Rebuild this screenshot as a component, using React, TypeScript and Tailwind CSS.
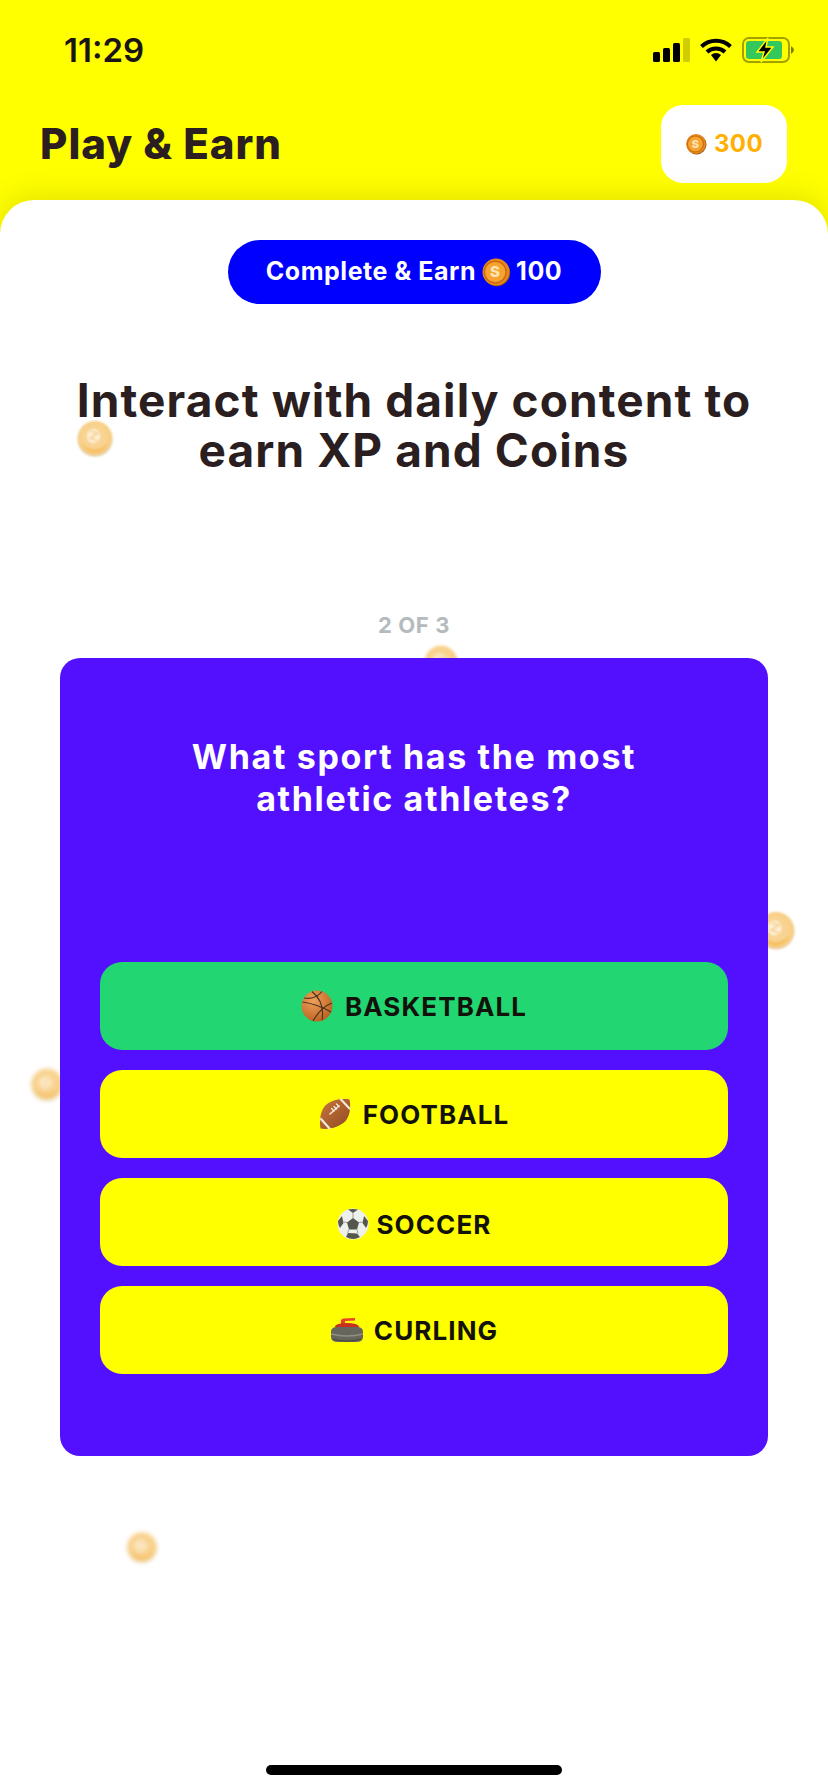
const font = "font-['Inter','Liberation_Sans',sans-serif]";

const Coin: React.FC<{ className?: string }> = ({ className }) => {
  return (
    <svg viewBox="0 0 40 40" className={className}>
      <circle cx="21" cy="21" r="18" fill="#8a4f10" />
      <circle cx="20" cy="20" r="18" fill="#e8871c" />
      <circle cx="19" cy="20" r="14.5" fill="#f7a32f" stroke="#c96c12" strokeWidth="2" />
      <text x="19" y="27" textAnchor="middle" fontSize="20" fontWeight="800" fill="#ffe6b8" fontFamily="Inter, sans-serif">
        S
      </text>
    </svg>
  );
};

const FloatingCoin: React.FC<{ className: string }> = ({ className }) => {
  return (
    <svg viewBox="0 0 40 40" className={`absolute ${className}`}>
      <circle cx="20" cy="21" r="18.5" fill="#dcc9a0" />
      <circle cx="20" cy="20" r="18" fill="#f9cf86" />
      <circle cx="19" cy="19" r="13.5" fill="#f8d391" />
      <path d="M6 26 Q19 38 34 26 Q30 34 20 36 Q10 35 6 26 Z" fill="#f6bf62" />
      <ellipse cx="18.5" cy="18" rx="7" ry="7.5" fill="#fff1d8" />
      <path d="M15 13 L23 15 L15 20 L23 23" fill="none" stroke="#f3cd8d" strokeWidth="1.6" />
    </svg>
  );
};

const Basketball = () => (
  <svg viewBox="0 0 32 32" className="w-[32px] h-[32px] shrink-0">
    <defs>
      <radialGradient id="bball" cx="38%" cy="32%" r="75%">
        <stop offset="0%" stopColor="#f0a05a" />
        <stop offset="100%" stopColor="#b9601f" />
      </radialGradient>
    </defs>
    <circle cx="16" cy="16" r="15.5" fill="url(#bball)" />
    <g fill="none" stroke="#46301f" strokeWidth="1.1">
      <path d="M1.5 12 Q16 14 30 22" />
      <path d="M11 1.5 Q24 12 21 30" />
      <path d="M21 1.5 Q14 10 3 8" />
      <path d="M31 13 Q20 17 12 31" />
    </g>
  </svg>
);

const Football = () => (
  <svg viewBox="0 0 32 32" className="w-[32px] h-[32px] shrink-0">
    <defs>
      <linearGradient id="fball" x1="0" y1="0" x2="1" y2="1">
        <stop offset="0%" stopColor="#c9763c" />
        <stop offset="100%" stopColor="#8f4a22" />
      </linearGradient>
    </defs>
    <path d="M30.5 1.5 C20 0 9 3 4.5 10 C1 15 .5 24 1.5 30.5 C10 32 21 29 27 22.5 C31 17 32 9 30.5 1.5 Z" fill="url(#fball)" />
    <g fill="none" stroke="#f2e8d8" strokeLinecap="round">
      <path d="M22 1.5 L30.5 10.5" strokeWidth="2.2" />
      <path d="M2 21 L10.5 30.5" strokeWidth="2.2" />
      <path d="M11 16 L20 8" strokeWidth="1.6" />
      <path d="M12.5 10.5 L15 13 M15 8.5 L17.5 11 M17.5 6 L20 8.5" strokeWidth="1.4" />
    </g>
  </svg>
);

const Soccer = () => (
  <svg viewBox="0 0 32 32" className="w-[32px] h-[32px] shrink-0">
    <circle cx="16" cy="16" r="15.5" fill="#eef0ec" />
    <g fill="#55564e">
      <path d="M16 10 L22 14.5 L20 21.5 L12 21.5 L10 14.5 Z" />
      <path d="M11 1.6 Q16 .2 21 1.6 L16 5 Z" />
      <path d="M1 13 L5 8 L6.5 15 L3 20 Q1 17 1 13 Z" />
      <path d="M31 13 L27 8 L25.5 15 L29 20 Q31 17 31 13 Z" />
      <path d="M9 29 L11 25 L20 25.5 L23 29 Q16 33 9 29 Z" />
    </g>
    <g stroke="#8a8b84" strokeWidth=".8" fill="none">
      <path d="M16 5 L16 10 M22 14.5 L25.5 14 M10 14.5 L6.5 14 M12 21.5 L10.5 25 M20 21.5 L21 25.5" />
    </g>
  </svg>
);

const Curling = () => (
  <svg viewBox="0 0 34 28" className="w-[34px] h-[28px] shrink-0">
    <path d="M11 9 L11 5 Q11 2.5 14 2.5 L25 2 L25 4.5 L15 5 L15 9 Z" fill="#e9402c" />
    <ellipse cx="17" cy="10.5" rx="12" ry="3.5" fill="#c7301f" />
    <path d="M1 16 Q1 11 7 11 L27 11 Q33 11 33 16 L33 21 Q33 26 26 26 L8 26 Q1 26 1 21 Z" fill="#66665c" />
    <path d="M1 18 Q17 22 33 18" stroke="#8f8f83" strokeWidth="1.6" fill="none" />
    <path d="M3 23 Q17 27 31 23" stroke="#44443c" strokeWidth="1" fill="none" />
  </svg>
);

const answers = [
  { label: "BASKETBALL", icon: <Basketball />, bg: "bg-[#22d672]", row: "gap-[12px]" },
  { label: "FOOTBALL", icon: <Football />, bg: "bg-[#ffff00]", row: "gap-[12px]" },
  { label: "SOCCER", icon: <Soccer />, bg: "bg-[#ffff00]", row: "gap-[8px] pt-[4px]" },
  { label: "CURLING", icon: <Curling />, bg: "bg-[#ffff00]", row: "gap-[10px]" },
];

const App = () => {
  return (
    <div className={`relative flex flex-col w-[828px] h-[1792px] overflow-hidden bg-[#ffff00] ${font}`}>
      {/* status bar */}
      <div className="flex justify-between items-center h-[100px] pl-[64px] pr-[34px]">
        <span className="text-[33px] leading-[38px] font-semibold text-[#1a1416] tracking-[0px]">11:29</span>
        <div className="flex items-center gap-[10px]">
          <svg viewBox="0 0 37 24" className="w-[37px] h-[24px]">
            <rect x="0" y="14" width="7" height="10" rx="1.5" fill="#000" />
            <rect x="10" y="10" width="7" height="14" rx="1.5" fill="#000" />
            <rect x="20" y="5" width="7" height="19" rx="1.5" fill="#000" />
            <rect x="30" y="0" width="7" height="24" rx="1.5" fill="#d0ce00" />
          </svg>
          <svg viewBox="0 0 32 24" className="w-[32px] h-[24px]">
            <g fill="none" stroke="#000" strokeWidth="4">
              <path d="M1.5 8.5 A21 21 0 0 1 30.5 8.5" />
              <path d="M7 14 A13 13 0 0 1 25 14" />
            </g>
            <path d="M11 17 A7.5 7.5 0 0 1 21 17 L16 23.5 Z" fill="#000" />
          </svg>
          <svg viewBox="0 0 52 26" className="w-[52px] h-[26px]">
            <rect x="1" y="1" width="46" height="24" rx="6" fill="none" stroke="#a3a100" strokeWidth="2" />
            <rect x="4" y="4" width="36" height="18" rx="3" fill="#34c759" />
            <path d="M49 9 Q52 11 52 13 Q52 15 49 17 Z" fill="#807e00" />
            <path d="M26 1 L15 15 L22 15 L19 25 L31 10 L24 10 Z" fill="#000" stroke="#ffff00" strokeWidth="1.5" />
          </svg>
        </div>
      </div>
      {/* header */}
      <div className="flex justify-between items-start h-[100px] pl-[40px] pr-[41px] pt-[5px]">
        <h1 className="mt-[14px] text-[42px] leading-[50px] font-extrabold text-[#2a1e20] tracking-[1px]">Play &amp; Earn</h1>
        <div className="flex justify-center items-center gap-[7px] w-[126px] h-[78px] rounded-[22px] bg-white">
          <Coin className="w-[22px] h-[22px]" />
          <span className="text-[24px] font-bold text-[#ffb000] tracking-[0.4px]">300</span>
        </div>
      </div>
      {/* main panel */}
      <div className="relative flex flex-col items-center flex-1 pt-[40px] bg-white rounded-t-[34px] shadow-[0_-6px_26px_rgba(120,110,0,0.18)]">
        <FloatingCoin className="left-[76px] top-[219px] w-[38px] h-[38px] blur-[1px]" />
        <FloatingCoin className="left-[423px] top-[444px] w-[36px] h-[36px] blur-[1.5px]" />
        <FloatingCoin className="left-[756px] top-[710px] w-[40px] h-[40px] blur-[1px]" />
        <FloatingCoin className="left-[30px] top-[867px] w-[34px] h-[34px] blur-[2px]" />
        <FloatingCoin className="left-[126px] top-[1331px] w-[32px] h-[32px] blur-[2px]" />

        <div className="flex justify-center items-center w-[373px] h-[64px] rounded-full bg-[#0000ff] text-white text-[25px] font-bold tracking-[0.55px]">
          <span>Complete &amp; Earn</span>
          <Coin className="w-[30px] h-[30px] mx-[5px]" />
          <span>100</span>
        </div>
        <h2 className="relative mt-[71px] text-center text-[46px] leading-[50px] font-bold text-[#2a1e20] tracking-[1.1px]">
          Interact with daily content to
          <br />
          earn XP and Coins
        </h2>
        <div className="mt-[138px] text-[22px] leading-[24px] font-bold text-[#b5babd] tracking-[0.6px]">2 OF 3</div>
        <div className="relative flex flex-col items-center w-[708px] h-[798px] mt-[21px] pt-[78px] rounded-[20px] bg-[#5210ff]">
          <p className="text-center text-[34px] leading-[42px] font-bold text-white tracking-[1.65px]">
            What sport has the most
            <br />
            athletic athletes?
          </p>
          <div className="flex flex-col gap-[20px] w-[628px] mt-[142px]">
            {answers.map((a) => (
              <div key={a.label} className={`flex justify-center items-center h-[88px] rounded-[22px] ${a.bg} ${a.row}`}>
                {a.icon}
                <span className="text-[26px] font-bold text-[#12120a] tracking-[1.1px]">{a.label}</span>
              </div>
            ))}
          </div>
        </div>
      </div>
      {/* home indicator */}
      <div className="absolute left-[266px] bottom-[17px] w-[296px] h-[10px] rounded-full bg-black" />
    </div>
  );
};

export default App;
